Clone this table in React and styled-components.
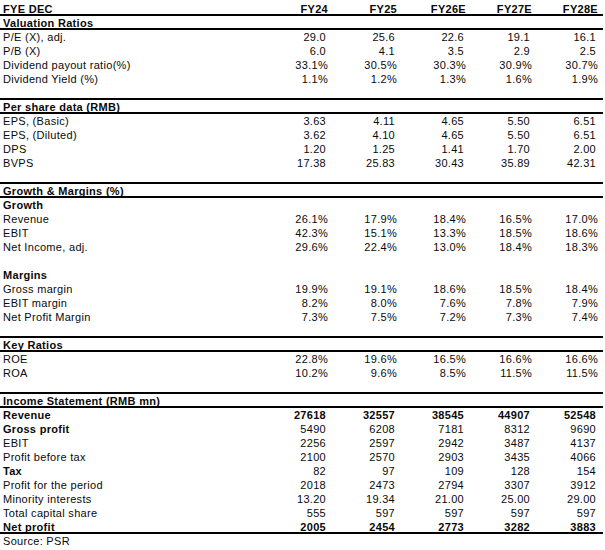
import React from "react";
import styled, { createGlobalStyle } from "styled-components";

const years = ["FY24", "FY25", "FY26E", "FY27E", "FY28E"];

// kind: head (bold label + rule), sub (bold label), data, blank
const rows = [
  { kind: "head", label: "Valuation Ratios" },
  { label: "P/E (X), adj.", values: ["29.0", "25.6", "22.6", "19.1", "16.1"] },
  { label: "P/B (X)", values: ["6.0", "4.1", "3.5", "2.9", "2.5"] },
  { label: "Dividend payout ratio(%)", values: ["33.1%", "30.5%", "30.3%", "30.9%", "30.7%"] },
  { label: "Dividend Yield (%)", values: ["1.1%", "1.2%", "1.3%", "1.6%", "1.9%"] },
  { kind: "blank", rule: true },
  { kind: "head", label: "Per share data (RMB)" },
  { label: "EPS, (Basic)", values: ["3.63", "4.11", "4.65", "5.50", "6.51"] },
  { label: "EPS, (Diluted)", values: ["3.62", "4.10", "4.65", "5.50", "6.51"] },
  { label: "DPS", values: ["1.20", "1.25", "1.41", "1.70", "2.00"] },
  { label: "BVPS", values: ["17.38", "25.83", "30.43", "35.89", "42.31"] },
  { kind: "blank", rule: true },
  { kind: "head", label: "Growth & Margins (%)" },
  { kind: "sub", label: "Growth" },
  { label: "Revenue", values: ["26.1%", "17.9%", "18.4%", "16.5%", "17.0%"] },
  { label: "EBIT", values: ["42.3%", "15.1%", "13.3%", "18.5%", "18.6%"] },
  { label: "Net Income, adj.", values: ["29.6%", "22.4%", "13.0%", "18.4%", "18.3%"] },
  { kind: "blank" },
  { kind: "sub", label: "Margins" },
  { label: "Gross margin", values: ["19.9%", "19.1%", "18.6%", "18.5%", "18.4%"] },
  { label: "EBIT margin", values: ["8.2%", "8.0%", "7.6%", "7.8%", "7.9%"] },
  { label: "Net Profit Margin", values: ["7.3%", "7.5%", "7.2%", "7.3%", "7.4%"] },
  { kind: "blank", rule: true },
  { kind: "head", label: "Key Ratios" },
  { label: "ROE", values: ["22.8%", "19.6%", "16.5%", "16.6%", "16.6%"] },
  { label: "ROA", values: ["10.2%", "9.6%", "8.5%", "11.5%", "11.5%"] },
  { kind: "blank", rule: true },
  { kind: "head", label: "Income Statement (RMB mn)" },
  { label: "Revenue", bold: true, boldValues: true, values: ["27618", "32557", "38545", "44907", "52548"] },
  { label: "Gross profit", bold: true, values: ["5490", "6208", "7181", "8312", "9690"] },
  { label: "EBIT", values: ["2256", "2597", "2942", "3487", "4137"] },
  { label: "Profit before tax", values: ["2100", "2570", "2903", "3435", "4066"] },
  { label: "Tax", bold: true, values: ["82", "97", "109", "128", "154"] },
  { label: "Profit for the period", values: ["2018", "2473", "2794", "3307", "3912"] },
  { label: "Minority interests", values: ["13.20", "19.34", "21.00", "25.00", "29.00"] },
  { label: "Total capital share", values: ["555", "597", "597", "597", "597"] },
  { label: "Net profit", bold: true, boldValues: true, rule: true, values: ["2005", "2454", "2773", "3282", "3883"] },
];

export default function App() {
  return (
    <>
      <GlobalStyle />
      <Sheet>
        <Row $rule>
          <Label $bold>FYE DEC</Label>
          {years.map((y) => (
            <Value key={y} $bold>
              {y}
            </Value>
          ))}
        </Row>

        {rows.map((r, i) => {
          if (r.kind === "blank") return <Row key={i} $rule={r.rule} />;
          if (r.kind === "head")
            return (
              <Row key={i} $rule>
                <Label $bold>{r.label}</Label>
              </Row>
            );
          if (r.kind === "sub")
            return (
              <Row key={i}>
                <Label $bold>{r.label}</Label>
              </Row>
            );
          return (
            <Row key={i} $rule={r.rule}>
              <Label $bold={r.bold}>{r.label}</Label>
              {r.values.map((v, j) => (
                <Value key={j} $bold={r.boldValues} $plain={!v.endsWith("%")}>
                  {v}
                </Value>
              ))}
            </Row>
          );
        })}

        <Row>
          <Label>Source: PSR</Label>
        </Row>
      </Sheet>
    </>
  );
}

const GlobalStyle = createGlobalStyle`
  body {
    margin: 0;
    background: #ffffff;
  }
`;

const Sheet = styled.div`
  width: 603px;
  padding-top: 2px;
  font-family: "Liberation Sans", Arial, sans-serif;
  font-size: 11px;
  letter-spacing: 0.3px;
  color: #0a0a0a;
`;

const Row = styled.div`
  display: grid;
  grid-template-columns: 263px 69px 69px 69px 66px 66px;
  height: 14px;
  box-sizing: border-box;
  padding-top: 1px;
  line-height: 13px;
  border-bottom: ${(p) => (p.$rule ? "2px solid #000" : "none")};
`;

const Label = styled.div`
  padding-left: 3px;
  white-space: nowrap;
  font-weight: ${(p) => (p.$bold ? 700 : 400)};
`;

const Value = styled.div`
  text-align: right;
  white-space: nowrap;
  padding-right: ${(p) => (p.$plain ? "6px" : "4px")};
  font-weight: ${(p) => (p.$bold ? 700 : 400)};
`;
